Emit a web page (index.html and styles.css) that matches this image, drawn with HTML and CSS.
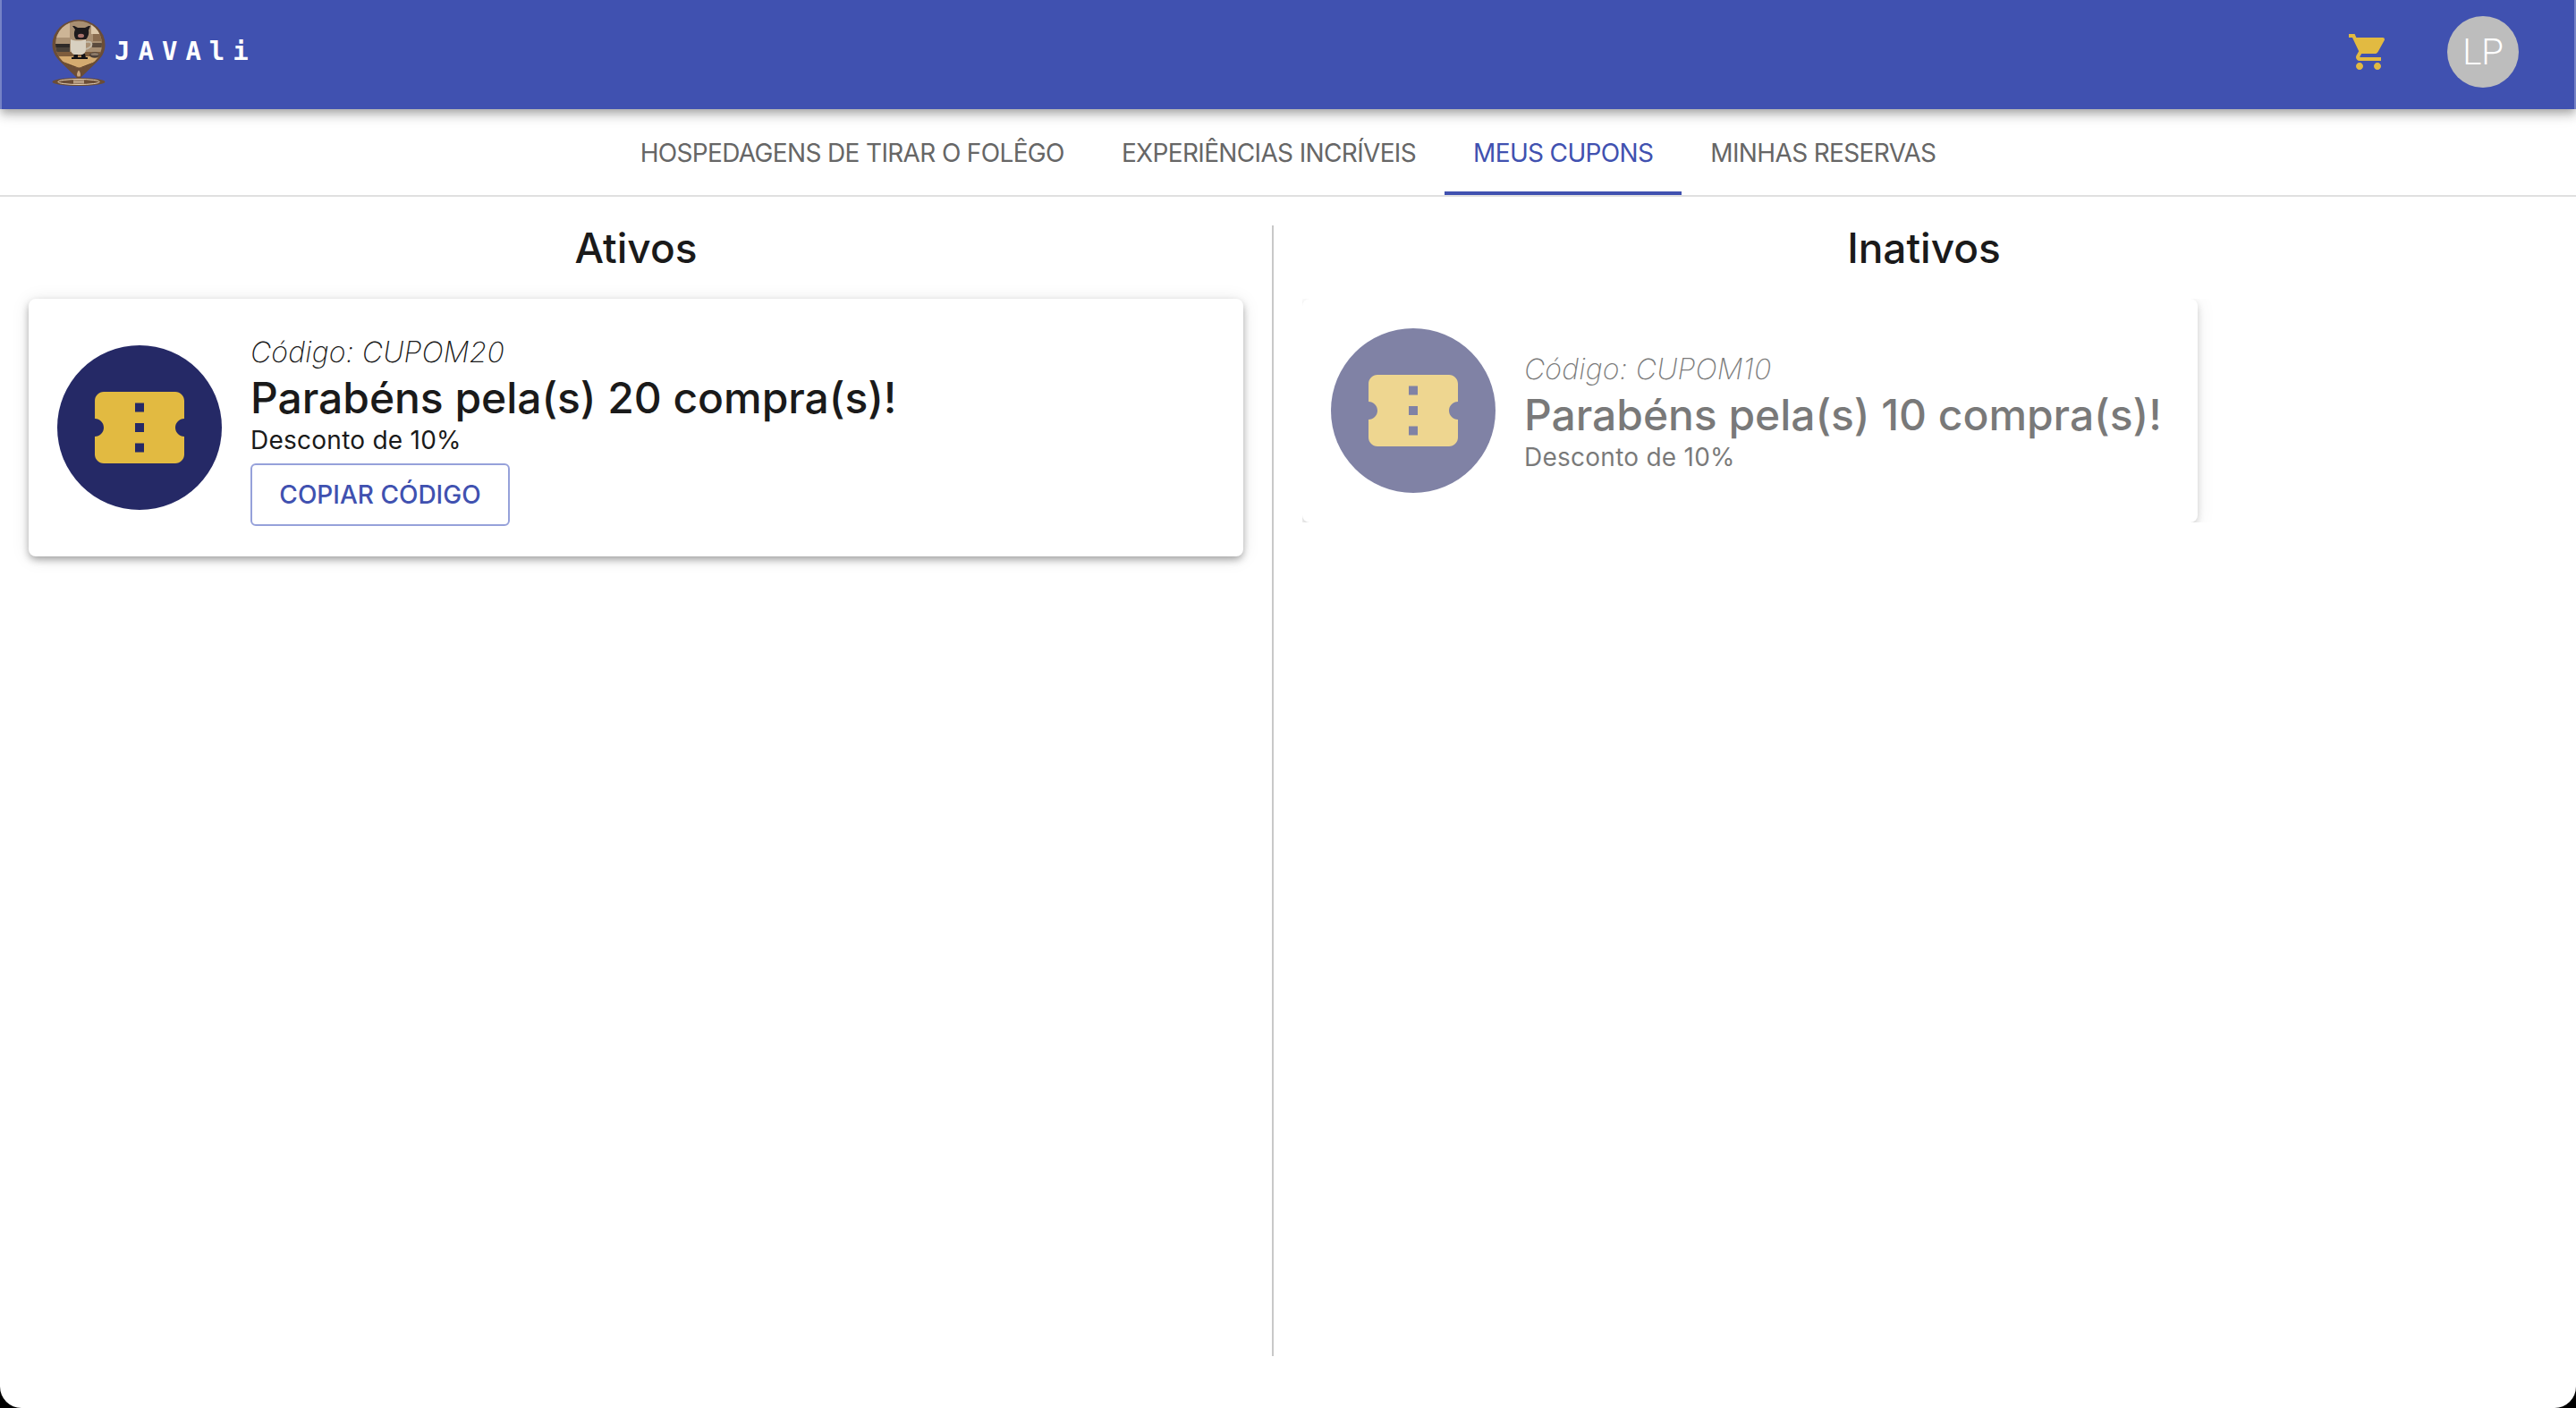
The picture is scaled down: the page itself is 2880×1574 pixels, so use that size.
FILE: index.html
```html
<!DOCTYPE html>
<html lang="pt-BR">
<head>
<meta charset="utf-8">
<title>Javali</title>
<link rel="stylesheet" href="styles.css">
</head>
<body>
<div class="window">
  <header class="appbar">
    <div class="brand">
      <svg class="logo" viewBox="0 0 60 74" width="60" height="74" aria-hidden="true">
        <defs>
          <clipPath id="lens"><circle cx="30" cy="27.500" r="26"/></clipPath>
        </defs>
        <ellipse cx="30" cy="69.500" rx="29.500" ry="4.500" fill="#6b4d36"/>
        <path d="M.5 28a29.500 28 0 0 1 59 0c0 8-4 14-9 19L30 67 9.500 47C4.500 42 .5 36 .5 28z" fill="#6b4d36"/>
        <g clip-path="url(#lens)">
          <rect x="0" y="0" width="60" height="60" fill="#a88f72"/>
          <rect x="3" y="2" width="17" height="18" fill="#cdb596"/>
          <rect x="44" y="2" width="14" height="14" fill="#dcc8aa"/>
          <rect x="46" y="16" width="12" height="8" fill="#8a6d50"/>
          <rect x="3" y="27" width="17" height="4" fill="#2e2a28"/>
          <rect x="3" y="31" width="17" height="5" fill="#4a423a"/>
          <rect x="45" y="26" width="13" height="5" fill="#5a4a3c"/>
          <path d="M0 36h60v22H0z" fill="#7d5c3c"/>
          <path d="M5 41h50l-4 5-20 8-21-8z" fill="#d4ab70"/>
          <path d="M9 46l21 8 21-8v3l-21 7-21-7z" fill="#5e4128"/>
          <ellipse cx="48" cy="39.500" rx="6" ry="3.200" fill="#4c4038"/>
          <ellipse cx="48" cy="38.500" rx="4.500" ry="1.500" fill="#8d7a68"/>
          <path d="M25 38h4v5h-5zM33 38h4l1 5h-5z" fill="#141214"/>
          <path d="M22 42h18v2H22z" fill="#141214"/>
          <path d="M26 11l-3-4 2 0 4 2h8l4-2 2 0-2 5c1 4-1 8-3 10H27c-2-2-3-7-1-11z" fill="#1d1a1c"/>
          <ellipse cx="32.500" cy="18" rx="3.500" ry="2.200" fill="#a8726c"/>
          <path d="M21 22c5 2 12 2 17 0v11c0 4-3 6-5 6h-7c-2 0-5-2-5-6z" fill="#d8d0c0"/>
          <path d="M38 25c8-2 9 5 0 8" fill="none" stroke="#c2b8a6" stroke-width="2"/>
        </g>
        <path d="M30 56.500c-2 2.500-2.500 5-1.500 7h3c1-2 .5-4.500-1.500-7z" fill="#c9a882"/>
        <ellipse cx="30" cy="69.500" rx="23" ry="3" fill="none" stroke="#e7d2b6" stroke-width="1"/>
        <rect x="24" y="67.500" width="12" height="4" fill="#e7d2b6" opacity=".6"/>
      </svg>
      <span class="wordmark">JAVAli</span>
    </div>
    <div class="actions">
      <svg class="cart" viewBox="0 0 24 24" width="48" height="48" aria-hidden="true"><path d="M7 18c-1.100 0-1.990.9-1.990 2S5.900 22 7 22s2-.9 2-2-.9-2-2-2zM1 2v2h2l3.600 7.590-1.350 2.450c-.16.28-.25.61-.25.96 0 1.100.9 2 2 2h12v-2H7.420c-.14 0-.25-.11-.25-.25l.03-.12.9-1.630h7.450c.75 0 1.410-.41 1.750-1.030l3.580-6.470c.08-.14.12-.31.12-.48 0-.55-.45-1-1-1H5.210l-.94-2H1zm16 16c-1.100 0-1.990.9-1.990 2s.89 2 1.990 2 2-.9 2-2-.9-2-2-2z"/></svg>
      <div class="user">LP</div>
    </div>
  </header>

  <nav class="tabs">
    <a class="tab">HOSPEDAGENS DE TIRAR O FOLÊGO</a>
    <a class="tab">EXPERIÊNCIAS INCRÍVEIS</a>
    <a class="tab tab-active">MEUS CUPONS</a>
    <a class="tab">MINHAS RESERVAS</a>
  </nav>

  <main class="columns">
    <section class="col col-left">
      <h2 class="col-title">Ativos</h2>
      <article class="card">
        <div class="badge">
          <svg viewBox="0 0 24 24" width="120" height="120" aria-hidden="true"><path d="M22 10V6c0-1.110-.9-2-2-2H4c-1.100 0-1.990.89-1.990 2v4c1.100 0 1.990.9 1.990 2s-.89 2-2 2v4c0 1.100.9 2 2 2h16c1.100 0 2-.9 2-2v-4c-1.100 0-2-.9-2-2s.9-2 2-2zm-9 7.500h-2v-2h2v2zm0-4.500h-2v-2h2v2zm0-4.500h-2v-2h2v2z"/></svg>
        </div>
        <div class="info">
          <p class="code">Código: CUPOM20</p>
          <p class="headline">Parabéns pela(s) 20 compra(s)!</p>
          <p class="discount">Desconto de 10%</p>
          <button class="copy" type="button">COPIAR CÓDIGO</button>
        </div>
      </article>
    </section>
    <section class="col col-right">
      <h2 class="col-title">Inativos</h2>
      <article class="card card-off">
        <div class="badge">
          <svg viewBox="0 0 24 24" width="120" height="120" aria-hidden="true"><path d="M22 10V6c0-1.110-.9-2-2-2H4c-1.100 0-1.990.89-1.990 2v4c1.100 0 1.990.9 1.990 2s-.89 2-2 2v4c0 1.100.9 2 2 2h16c1.100 0 2-.9 2-2v-4c-1.100 0-2-.9-2-2s.9-2 2-2zm-9 7.500h-2v-2h2v2zm0-4.500h-2v-2h2v2zm0-4.500h-2v-2h2v2z"/></svg>
        </div>
        <div class="info">
          <p class="code">Código: CUPOM10</p>
          <p class="headline">Parabéns pela(s) 10 compra(s)!</p>
          <p class="discount">Desconto de 10%</p>
        </div>
      </article>
    </section>
  </main>
</div>
</body>
</html>
```

FILE: styles.css
```css
* { box-sizing: border-box; }
html, body { margin: 0; height: 100%; background: #000; }
body { font-family: "Inter", "Open Sans", sans-serif; overflow: hidden; }

.window {
  height: 1574px;
  background: #fff;
  border-radius: 0 0 24px 24px;
  overflow: hidden;
  display: flex;
  flex-direction: column;
}

.appbar {
  height: 122px;
  padding: 12px 62px 24px 56px;
  background: #4051b0;
  border-left: 2px solid #7683c6;
  border-right: 2px solid #7683c6;
  display: flex;
  justify-content: space-between;
  align-items: flex-start;
  position: relative;
  z-index: 2;
  box-shadow: 0 4px 8px -2px rgba(0,0,0,.2), 0 8px 10px 0 rgba(0,0,0,.14), 0 2px 20px 0 rgba(0,0,0,.12);
}

.brand { display: flex; align-items: flex-start; }
.logo { display: block; margin-top: 10px; }
.wordmark {
  font-family: "DejaVu Sans Mono", monospace;
  font-weight: 700;
  font-size: 29px;
  line-height: 34px;
  letter-spacing: 9px;
  color: #fff;
  margin: 28px 0 0 10px;
}

.actions { display: flex; align-items: flex-start; gap: 64px; }
.cart { fill: #e2ba41; display: block; margin-top: 22px; }
.user {
  width: 80px;
  height: 80px;
  margin-top: 6px;
  border-radius: 50%;
  background: #bdbdbd;
  color: #fff;
  font-family: "Roboto", sans-serif;
  font-size: 40px;
  font-weight: 300;
  display: flex;
  align-items: center;
  justify-content: center;
}

.tabs {
  height: 98px;
  display: flex;
  justify-content: center;
  border-bottom: 2px solid #e0e0e0;
}
.tab {
  padding: 6px 32px 0;
  height: 96px;
  display: flex;
  align-items: center;
  font-size: 28px;
  font-weight: 400;
  color: #666;
  letter-spacing: -0.65px;
  border-bottom: 4px solid transparent;
}
.tab-active { color: #4051b0; border-bottom-color: #4051b0; }

.columns {
  flex: 1;
  display: grid;
  grid-template-columns: 1424px 1fr;
  padding: 32px 0 58px;
}
.col { padding: 0 32px; }
.col-left { border-right: 2px solid #c8c8c8; }

.col-title {
  margin: 0 0 32px;
  height: 50px;
  font-size: 46px;
  line-height: 50px;
  font-weight: 500;
  text-align: center;
  color: #1a1a1a;
}
.col-right .col-title { width: 1390px; }

.card {
  display: flex;
  align-items: center;
  gap: 32px;
  padding: 32px;
  background: #fff;
  border-radius: 8px;
  box-shadow: 0 4px 8px -2px rgba(0,0,0,.25), 0 4px 10px 0 rgba(0,0,0,.14), 0 2px 20px 0 rgba(0,0,0,.10);
}
.col-left .card { width: 1358px; height: 288px; }
.card-off { width: 1001px; height: 250px; opacity: .58; clip-path: inset(0 -30px 0 0); }

.badge {
  width: 184px;
  height: 184px;
  flex: none;
  border-radius: 50%;
  background: #252966;
  display: flex;
  align-items: center;
  justify-content: center;
}
.badge svg { display: block; fill: #e2ba41; }

.info { display: flex; flex-direction: column; align-items: flex-start; }
.info p { margin: 0; }
.code { padding-top: 2px; font-size: 32px; line-height: 48px; font-style: italic; font-weight: 200; color: #1a1a1a; letter-spacing: .15px; }
.headline { font-size: 48px; line-height: 54px; font-weight: 500; color: #1a1a1a; white-space: nowrap; letter-spacing: -.05px; }
.discount { font-size: 28px; line-height: 40px; font-weight: 400; color: #1a1a1a; letter-spacing: .25px; }
.copy {
  margin-top: 6px;
  width: 290px;
  height: 70px;
  background: #fff;
  border: 2px solid #96a1da;
  border-radius: 6px;
  font: 500 28px "Inter", sans-serif;
  color: #4051b0;
  padding: 0;
}
```
